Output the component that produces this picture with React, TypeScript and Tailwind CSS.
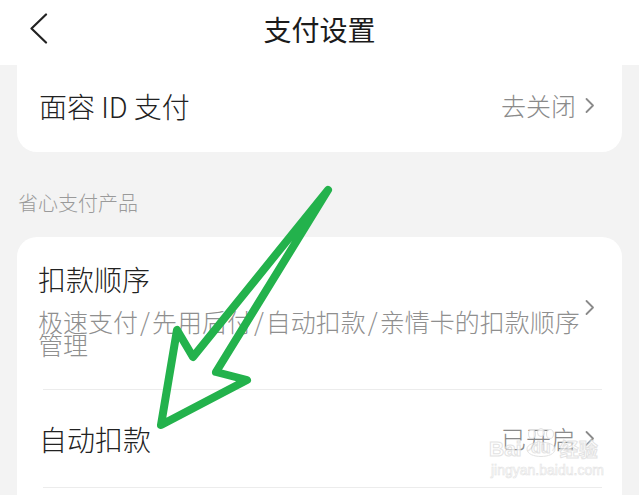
import React from "react";

const Chevron = ({ className = "" }: { className?: string }) => (
  <svg width="11" height="17" viewBox="0 0 11 17" className={className} fill="none">
    <path d="M2.5 2 L9 8.5 L2.5 15" stroke="#8a8a8a" strokeWidth="1.8" strokeLinecap="round" strokeLinejoin="round" />
  </svg>
);

const Slash = () => <span className="px-[2px]">/</span>;

export default function App() {
  return (
    <div className="relative w-[639px] h-[495px] overflow-hidden bg-[#f3f3f3] font-['Noto_Sans_CJK_SC','Noto_Sans',sans-serif] font-light flex flex-col">
      {/* header */}
      <div className="h-[65px] shrink-0 bg-white grid grid-cols-[1fr_auto_1fr] items-start">
        <div className="pl-[29px] pt-[13px]">
          <svg width="19" height="31" viewBox="0 0 19 31" fill="none">
            <path d="M17 1.5 L2.5 15.5 L17 29.5" stroke="#222" strokeWidth="2.2" strokeLinecap="round" strokeLinejoin="round" />
          </svg>
        </div>
        <div className="pt-[15px] text-[28px] leading-[28px] font-normal text-[#1b1b1b]">支付设置</div>
        <div />
      </div>

      {/* card 1 */}
      <div className="mx-[17px] h-[87px] shrink-0 bg-white rounded-b-[20px] flex items-center justify-between pl-[22px] pr-[27px] pb-[6px]">
        <div className="text-[28px] leading-[28px] text-[#222]">面容 ID 支付</div>
        <div className="flex items-center gap-[8px]">
          <span className="text-[25px] leading-[25px] text-[#8a8a8a]">去关闭</span>
          <Chevron />
        </div>
      </div>

      {/* section label */}
      <div className="mt-[41px] ml-[18px] text-[20px] leading-[20px] text-[#9a9a9a]">省心支付产品</div>

      {/* card 2 */}
      <div className="mt-[24px] mx-[17px] flex-1 bg-white rounded-t-[20px] flex flex-col">
        <div className="flex items-center justify-between pl-[21px] pr-[27px] pt-[28px] pb-[33px]">
          <div>
            <div className="text-[28px] leading-[28px] text-[#222]">扣款顺序</div>
            <div className="mt-[17px] text-[25px] leading-[23px] text-[#8f8f8f] whitespace-nowrap">
              极速支付<Slash />先用后付<Slash />自动扣款<Slash />亲情卡的扣款顺序
              <br />
              管理
            </div>
          </div>
          <Chevron className="mb-[6px]" />
        </div>
        <div className="ml-[26px] mr-[20px] h-px bg-[#ececec]" />
        <div className="h-[97px] flex items-center justify-between pl-[22px] pr-[27px]">
          <div className="text-[28px] leading-[28px] text-[#222]">自动扣款</div>
          <div className="flex items-center gap-[8px]">
            <span className="text-[25px] leading-[25px] text-[#8a8a8a]">已开启</span>
            <Chevron />
          </div>
        </div>
        <div className="ml-[26px] mr-[20px] h-px bg-[#ececec]" />
      </div>

      {/* watermark */}
      <div className="absolute left-[489px] top-[428px] flex flex-col items-start pointer-events-none opacity-80">
        <div className="flex items-end font-['Liberation_Sans',sans-serif] font-bold text-[21px] leading-[22px] text-white [-webkit-text-stroke:1px_#dcdcdc]">
          <span>Bai</span>
          <span className="relative mx-[1px] w-[36px] h-[32px] flex items-end justify-center">
            <svg width="36" height="32" viewBox="0 0 36 32" className="absolute inset-0" fill="none" stroke="#dcdcdc" strokeWidth="1">
              <ellipse cx="9" cy="6" rx="3.5" ry="4.5" fill="#fff" />
              <ellipse cx="18" cy="4.5" rx="3.5" ry="4" fill="#fff" />
              <ellipse cx="27" cy="6" rx="3.5" ry="4.5" fill="#fff" />
              <path d="M4 21 C4 12 32 12 32 21 C32 31 4 31 4 21 Z" fill="#fff" />
            </svg>
            <span className="relative text-[16px] leading-[20px] pb-[2px]">du</span>
          </span>
          <span className="font-['Noto_Sans_CJK_SC',sans-serif] text-[19px] leading-[22px]">经验</span>
        </div>
        <div className="mt-[3px] ml-[2px] font-['Liberation_Sans',sans-serif] font-normal text-[14px] leading-[14px] text-white [-webkit-text-stroke:0.6px_#dcdcdc]">
          jingyan.baidu.com
        </div>
      </div>

      {/* annotation arrow */}
      <svg className="absolute left-0 top-0 pointer-events-none" width="639" height="495" viewBox="0 0 639 495" fill="none">
        <polygon
          points="328,190 193,357 177,330 161,425 247,380 216,372"
          stroke="#23b24c"
          strokeWidth="8"
          strokeLinejoin="round"
          strokeLinecap="round"
        />
      </svg>
    </div>
  );
}
